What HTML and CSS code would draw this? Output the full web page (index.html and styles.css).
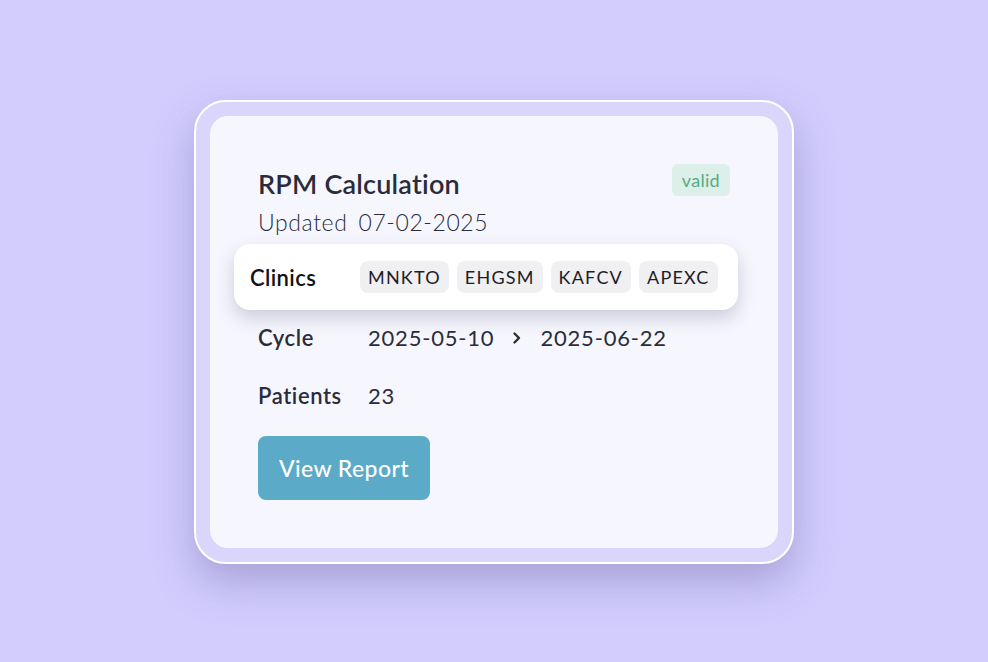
FILE: index.html
```html
<!DOCTYPE html>
<html>
<head>
<meta charset="utf-8">
<link rel="stylesheet" href="styles.css">
</head>
<body>
<div class="frame">
  <div class="card">
    <div class="header">
      <div class="titles">
        <div class="title">RPM Calculation</div>
        <div class="updated"><span>Updated</span><span>07-02-2025</span></div>
      </div>
      <div class="badge">valid</div>
    </div>
    <div class="clinics">
      <div class="clinics-label">Clinics</div>
      <div class="chips">
        <span class="chip">MNKTO</span>
        <span class="chip">EHGSM</span>
        <span class="chip">KAFCV</span>
        <span class="chip">APEXC</span>
      </div>
    </div>
    <div class="row row-cycle">
      <div class="label">Cycle</div>
      <div class="value">
        <span>2025-05-10</span>
        <svg class="chev" width="12" height="14" viewBox="0 0 12 14"><path d="M3.5 2.5 L8 7 L3.5 11.5" fill="none" stroke="#2b2c3a" stroke-width="2.4" stroke-linecap="round" stroke-linejoin="round"/></svg>
        <span>2025-06-22</span>
      </div>
    </div>
    <div class="row row-patients">
      <div class="label">Patients</div>
      <div class="value"><span>23</span></div>
    </div>
    <button class="btn">View Report</button>
  </div>
</div>
</body>
</html>
```
FILE: styles.css
```css
html, body {
  margin: 0;
  padding: 0;
}
body {
  width: 988px;
  height: 662px;
  background: #d2cdfd;
  display: flex;
  align-items: center;
  justify-content: center;
  font-family: "Lato", "Noto Sans", sans-serif;
  color: #2b2c3a;
}
.frame {
  box-sizing: border-box;
  width: 600px;
  height: 464px;
  margin-top: 2px;
  border: 2px solid #ffffff;
  border-radius: 32px;
  background: #d9d5fb;
  padding: 14px;
  box-shadow: 0 18px 40px rgba(90, 80, 150, 0.35);
}
.card {
  box-sizing: border-box;
  height: 432px;
  background: #f6f6fe;
  border-radius: 18px;
  padding: 48px 48px 0 48px;
  display: flex;
  flex-direction: column;
  align-items: flex-start;
}
.header {
  display: flex;
  justify-content: space-between;
  align-items: flex-start;
  align-self: stretch;
}
.title {
  font-size: 27px;
  font-weight: 600;
  letter-spacing: 0.2px;
  line-height: 40px;
  color: #2b2c3a;
}
.updated {
  font-size: 23px;
  font-weight: 300;
  letter-spacing: 0.6px;
  line-height: 30px;
  margin-top: 3px;
  display: flex;
  gap: 11px;
  color: #2b2c3a;
}
.badge {
  background: #dcefe9;
  color: #55ad85;
  font-size: 18px;
  letter-spacing: 0.3px;
  line-height: 32px;
  height: 32px;
  padding: 0 10px;
  border-radius: 6px;
}
.clinics {
  box-sizing: border-box;
  align-self: stretch;
  margin: 7px -8px 0 -24px;
  height: 66px;
  background: #ffffff;
  border-radius: 16px;
  box-shadow: 0 8px 18px rgba(60, 60, 90, 0.22);
  display: flex;
  align-items: center;
  padding: 0 16px;
}
.clinics-label {
  width: 110px;
  font-size: 22px;
  font-weight: 600;
  letter-spacing: 0.4px;
  color: #111118;
}
.chips {
  display: flex;
  gap: 8px;
}
.chip {
  background: #f0f0f3;
  border-radius: 8px;
  height: 32px;
  line-height: 32px;
  padding: 0 8px;
  font-size: 18px;
  letter-spacing: 1.2px;
  color: #1d1d26;
}
.row {
  display: flex;
  align-items: center;
  line-height: 28px;
}
.row-cycle {
  margin-top: 14px;
}
.row-patients {
  margin-top: 30px;
}
.label {
  width: 110px;
  font-size: 22px;
  font-weight: 600;
  letter-spacing: 0.6px;
  color: #2b2c3a;
}
.value {
  display: flex;
  align-items: center;
  gap: 17px;
  font-size: 22px;
  font-weight: 400;
  letter-spacing: 0.8px;
  color: #2b2c3a;
}
.chev {
  display: block;
}
.btn {
  margin-top: 26px;
  height: 64px;
  width: 172px;
  border: none;
  border-radius: 8px;
  background: #5aaac8;
  color: #ffffff;
  font-family: "Lato", "Noto Sans", sans-serif;
  font-size: 23px;
  font-weight: 500;
  letter-spacing: 0.4px;
  padding: 0;
}
```
